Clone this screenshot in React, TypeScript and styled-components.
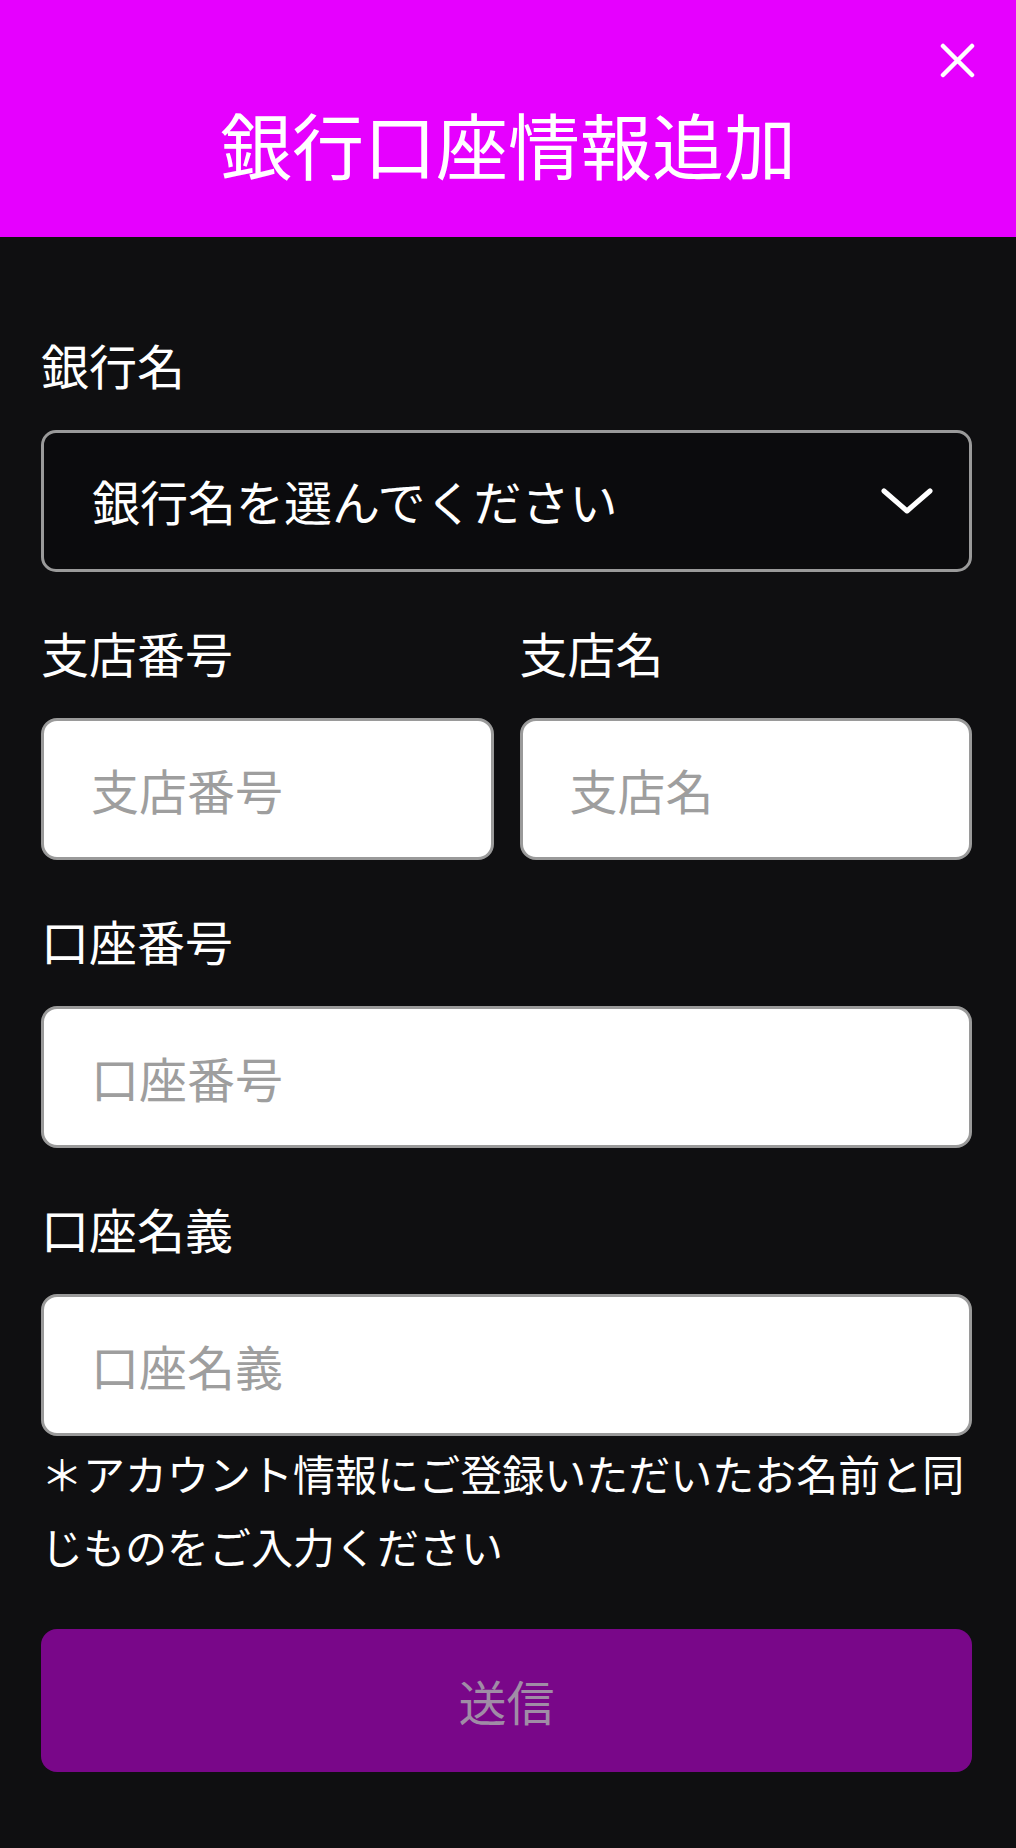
import React from "react";
import styled, { createGlobalStyle } from "styled-components";

const Global = createGlobalStyle`
  html, body {
    margin: 0;
    padding: 0;
    background: #0f0f11;
  }
  body {
    font-family: "Noto Sans CJK JP", "Noto Sans", sans-serif;
    -webkit-font-smoothing: antialiased;
  }
  * { box-sizing: border-box; }
`;

const Page = styled.div`
  width: 1016px;
  min-height: 1848px;
  background: #0f0f11;
  display: flex;
  flex-direction: column;
`;

const Header = styled.header`
  position: relative;
  height: 237px;
  background: #e600ff;
  display: flex;
  align-items: center;
  justify-content: center;
  padding-top: 50px;
`;

const Title = styled.h1`
  margin: 0;
  font-size: 72px;
  line-height: 1.2;
  font-weight: 400;
  color: #ffffff;
`;

const CloseButton = styled.button`
  position: absolute;
  top: 43px;
  right: 41px;
  width: 35px;
  height: 35px;
  padding: 0;
  border: none;
  background: transparent;
  display: flex;
  cursor: pointer;
`;

const Form = styled.form`
  display: flex;
  flex-direction: column;
  padding: 91px 44px 75px 41px;
`;

const Field = styled.div`
  display: flex;
  flex-direction: column;
  gap: 30px;
  min-width: 0;
`;

const Section = styled.div<{ $first?: boolean }>`
  margin-top: ${(p) => (p.$first ? "0" : "44px")};
`;

const Row = styled.div`
  display: grid;
  grid-template-columns: 1fr 1fr;
  column-gap: 26px;
`;

const Label = styled.label`
  font-size: 48px;
  line-height: 72px;
  color: #ffffff;
  font-weight: 400;
`;

const SelectBox = styled.div`
  height: 142px;
  border: 3px solid #9a9a9a;
  border-radius: 15px;
  background: #0b0b0d;
  display: flex;
  align-items: center;
  justify-content: space-between;
  padding: 0 35px 0 48px;
  color: #ffffff;
  font-size: 48px;
  cursor: pointer;
`;

const SelectText = styled.span`
  line-height: 1.2;
`;

const TextInput = styled.input`
  height: 142px;
  width: 100%;
  border: 3px solid #9a9a9a;
  border-radius: 16px;
  background: #ffffff;
  padding: 0 0 0 47px;
  font-family: "Noto Sans CJK JP", "Noto Sans", sans-serif;
  font-size: 48px;
  color: #222222;
  outline: none;
  &::placeholder {
    color: #9e9e9e;
  }
`;

const Note = styled.p`
  margin: 0;
  font-size: 42px;
  line-height: 73px;
  color: #ffffff;
`;

const SubmitButton = styled.button`
  margin-top: 47px;
  height: 143px;
  width: 100%;
  border: none;
  border-radius: 16px;
  background: #790789;
  color: #a08ca6;
  font-family: "Noto Sans CJK JP", "Noto Sans", sans-serif;
  font-size: 48px;
  line-height: 1.2;
`;

const CloseIcon = () => (
  <svg width="35" height="35" viewBox="0 0 35 35" fill="none">
    <path d="M3 3 L32 32 M32 3 L3 32" stroke="#ffffff" strokeWidth="4.5" strokeLinecap="round" />
  </svg>
);

const Chevron = () => (
  <svg width="54" height="30" viewBox="0 0 54 30" fill="none">
    <path d="M4 5 L27 25 L50 5" stroke="#ffffff" strokeWidth="5" strokeLinecap="round" strokeLinejoin="round" />
  </svg>
);

export default function App() {
  return (
    <Page>
      <Global />
      <Header>
        <Title>銀行口座情報追加</Title>
        <CloseButton type="button" aria-label="閉じる">
          <CloseIcon />
        </CloseButton>
      </Header>
      <Form onSubmit={(e) => e.preventDefault()}>
        <Section $first>
          <Field>
            <Label>銀行名</Label>
            <SelectBox>
              <SelectText>銀行名を選んでください</SelectText>
              <Chevron />
            </SelectBox>
          </Field>
        </Section>
        <Section>
          <Row>
            <Field>
              <Label>支店番号</Label>
              <TextInput placeholder="支店番号" />
            </Field>
            <Field>
              <Label>支店名</Label>
              <TextInput placeholder="支店名" />
            </Field>
          </Row>
        </Section>
        <Section>
          <Field>
            <Label>口座番号</Label>
            <TextInput placeholder="口座番号" />
          </Field>
        </Section>
        <Section>
          <Field>
            <Label>口座名義</Label>
            <TextInput placeholder="口座名義" />
          </Field>
        </Section>
        <Note>＊アカウント情報にご登録いただいたお名前と同じものをご入力ください</Note>
        <SubmitButton type="submit" disabled>
          送信
        </SubmitButton>
      </Form>
    </Page>
  );
}
